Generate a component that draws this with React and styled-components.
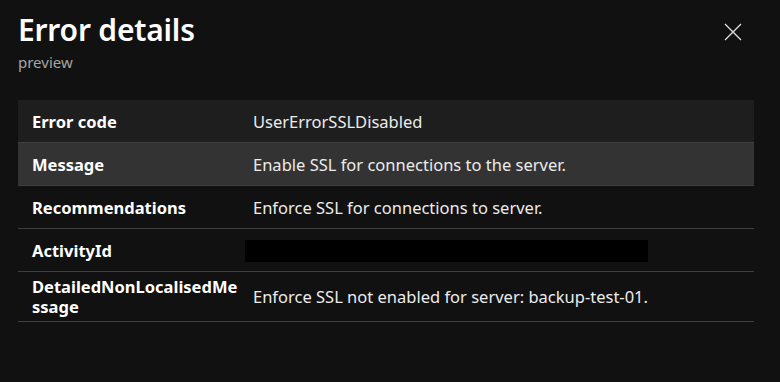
import React from "react";
import styled, { createGlobalStyle } from "styled-components";

const Global = createGlobalStyle`
  html, body { margin: 0; padding: 0; background: #111111; }
  body { font-family: "Noto Sans", "Open Sans", sans-serif; color: #ffffff; }
  * { box-sizing: border-box; }
`;

const Panel = styled.div`
  width: 780px;
  height: 382px;
  background: #111111;
  padding: 12px 26px 0 18px;
  display: flex;
  flex-direction: column;
`;

const Header = styled.div`
  display: flex;
  justify-content: space-between;
  align-items: flex-start;
`;

const Titles = styled.div`
  display: flex;
  flex-direction: column;
`;

const Title = styled.h1`
  margin: 0;
  font-size: 30px;
  line-height: 36px;
  font-weight: 600;
  color: #ffffff;
  letter-spacing: -0.2px;
`;

const Subtitle = styled.div`
  font-size: 15px;
  line-height: 20px;
  color: #a6a6a6;
  margin-top: 4px;
`;

const CloseButton = styled.button`
  background: none;
  border: none;
  padding: 0;
  margin: 11px 12px 0 0;
  width: 18px;
  height: 18px;
  display: flex;
  align-items: center;
  justify-content: center;
  cursor: pointer;
`;

const Table = styled.div`
  margin-top: 28px;
  display: grid;
  grid-template-columns: 227px 1fr;
`;

const Row = styled.div`
  display: contents;
`;

const Cell = styled.div`
  min-height: 43px;
  display: flex;
  align-items: center;
  background: ${(p) => p.$bg};
  border-bottom: 1px solid #3f3f3f;
  font-size: 16.5px;
  line-height: 20px;
`;

const Label = styled(Cell)`
  padding: 5px 2px 4px 14px;
  font-weight: 700;
  color: #ffffff;
  word-break: break-all;
`;

const Value = styled(Cell)`
  padding: 5px 8px 4px 0;
  color: #ececec;
`;

const ValueText = styled.span`
  padding-left: 8px;
`;

const Redacted = styled.div`
  width: 403px;
  height: 22px;
  background: #000000;
`;

const rows = [
  { label: "Error code", value: "UserErrorSSLDisabled", bg: "#1e1e1e" },
  { label: "Message", value: "Enable SSL for connections to the server.", bg: "#333333" },
  { label: "Recommendations", value: "Enforce SSL for connections to server.", bg: "transparent" },
  { label: "ActivityId", redacted: true, bg: "transparent" },
  { label: "DetailedNonLocalisedMessage", value: "Enforce SSL not enabled for server: backup-test-01.", bg: "transparent" },
];

export default function App() {
  return (
    <>
      <Global />
      <Panel>
        <Header>
          <Titles>
            <Title>Error details</Title>
            <Subtitle>preview</Subtitle>
          </Titles>
          <CloseButton aria-label="Close">
            <svg width="18" height="18" viewBox="0 0 18 18">
              <path d="M1 1 L17 17 M17 1 L1 17" stroke="#e0e0e0" strokeWidth="1.3" fill="none" />
            </svg>
          </CloseButton>
        </Header>
        <Table>
          {rows.map((r) => (
            <Row key={r.label}>
              <Label $bg={r.bg}>{r.label}</Label>
              <Value $bg={r.bg}>
                {r.redacted ? <Redacted /> : <ValueText>{r.value}</ValueText>}
              </Value>
            </Row>
          ))}
        </Table>
      </Panel>
    </>
  );
}
